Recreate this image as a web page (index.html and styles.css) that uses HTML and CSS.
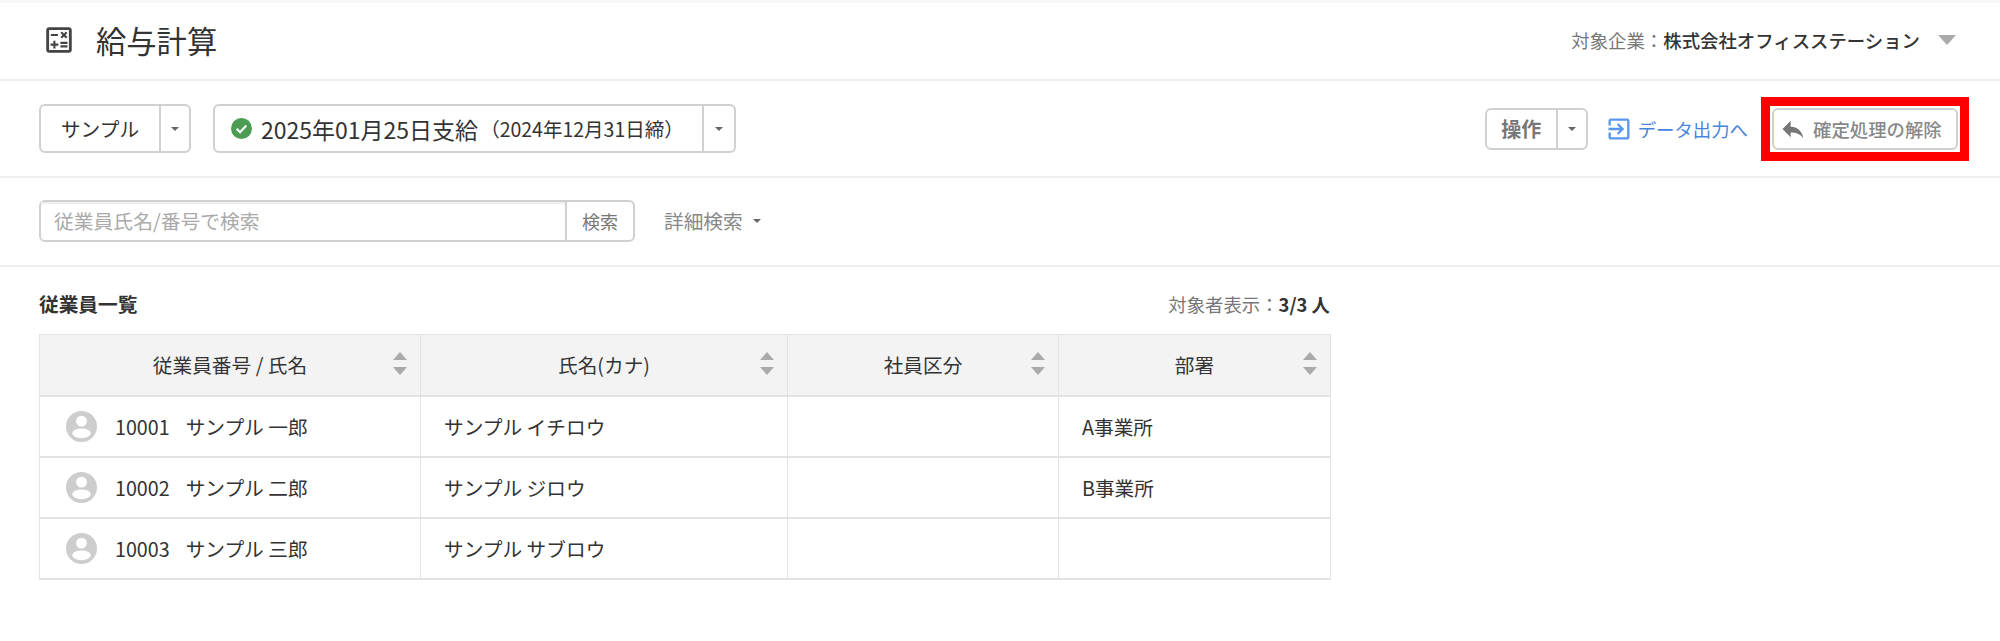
FILE: index.html
```html
<!DOCTYPE html>
<html lang="ja">
<head>
<meta charset="utf-8">
<title>給与計算</title>
<link rel="stylesheet" href="styles.css">
</head>
<body>
<header class="page-head">
  <div class="head-title">
    <svg class="icon-calc" viewBox="0 0 24 24"><path d="M19 3H5c-1.1 0-2 .9-2 2v14c0 1.1.9 2 2 2h14c1.1 0 2-.9 2-2V5c0-1.1-.9-2-2-2zm0 16H5V5h14v14zM6.25 7.72h5v1.5h-5zM13 15.75h5v1.5h-5zM13 13.25h5v1.5h-5zM8 18h1.5v-2h2v-1.5h-2v-2H8v2H6V16h2zM14.09 10.95l1.41-1.41 1.41 1.41 1.06-1.06-1.41-1.42 1.41-1.41L16.91 6 15.5 7.41 14.09 6l-1.06 1.06 1.41 1.41-1.41 1.42z"/></svg>
    <h1>給与計算</h1>
  </div>
  <div class="company"><span class="muted">対象企業：</span><b>株式会社オフィスステーション</b><i class="tri"></i></div>
</header>

<section class="toolbar">
  <div class="tool-left">
    <div class="split split-sample"><span class="split-main">サンプル</span><span class="split-caret"><i class="caret"></i></span></div>
    <div class="split split-date">
      <span class="split-main date-main">
        <svg class="icon-check" viewBox="0 0 20 20"><circle cx="10" cy="10" r="10" fill="#4d9c54"/><path d="M5.4 10.3l3.2 3.2 6-6.4" fill="none" stroke="#fff" stroke-width="2"/></svg>
        <span class="date-big">2025年01月25日支給</span><span class="date-small">（2024年12月31日締）</span>
      </span>
      <span class="split-caret"><i class="caret"></i></span>
    </div>
  </div>
  <div class="tool-right">
    <div class="split split-op"><span class="split-main op-main">操作</span><span class="split-caret"><i class="caret"></i></span></div>
    <a class="export-link"><svg class="icon-export" viewBox="0 0 24 24"><path d="M10.09 15.59L11.5 17l5-5-5-5-1.41 1.41L12.67 11H3v2h9.67l-2.58 2.59zM19 3H5c-1.11 0-2 .9-2 2v4h2V5h14v14H5v-4H3v4c0 1.1.89 2 2 2h14c1.1 0 2-.9 2-2V5c0-1.1-.9-2-2-2z"/></svg>データ出力へ</a>
    <div class="highlight">
      <button class="undo-btn"><svg class="icon-reply" viewBox="0 0 24 24"><path d="M10 9V5l-7 7 7 7v-4.1c5 0 8.5 1.6 11 5.1-1-5-4-10-11-10z"/></svg>確定処理の解除</button>
    </div>
  </div>
</section>

<section class="filter">
  <div class="search">
    <span class="search-input">従業員氏名/番号で検索</span>
    <span class="search-btn">検索</span>
  </div>
  <span class="detail">詳細検索<i class="caret"></i></span>
</section>

<main class="content">
  <div class="list">
    <div class="list-head">
      <b class="list-title">従業員一覧</b>
      <span class="count"><span class="muted">対象者表示：</span><b>3/3 人</b></span>
    </div>
    <table class="grid">
      <colgroup><col class="c1"><col class="c2"><col class="c3"><col class="c4"></colgroup>
      <thead>
        <tr>
          <th>従業員番号 / 氏名<span class="sort"><i class="up"></i><i class="down"></i></span></th>
          <th>氏名(カナ)<span class="sort"><i class="up"></i><i class="down"></i></span></th>
          <th>社員区分<span class="sort"><i class="up"></i><i class="down"></i></span></th>
          <th>部署<span class="sort"><i class="up"></i><i class="down"></i></span></th>
        </tr>
      </thead>
      <tbody>
        <tr>
          <td><div class="emp"><svg class="avatar" viewBox="0 0 32 32"><circle cx="16" cy="16" r="16" fill="#cdcdcd"/><circle cx="16" cy="10.5" r="5.6" fill="#fff"/><ellipse cx="16" cy="23" rx="9.5" ry="5" fill="#fff"/></svg><span class="emp-no">10001</span><span>サンプル 一郎</span></div></td>
          <td>サンプル イチロウ</td><td></td><td>A事業所</td>
        </tr>
        <tr>
          <td><div class="emp"><svg class="avatar" viewBox="0 0 32 32"><circle cx="16" cy="16" r="16" fill="#cdcdcd"/><circle cx="16" cy="10.5" r="5.6" fill="#fff"/><ellipse cx="16" cy="23" rx="9.5" ry="5" fill="#fff"/></svg><span class="emp-no">10002</span><span>サンプル 二郎</span></div></td>
          <td>サンプル ジロウ</td><td></td><td>B事業所</td>
        </tr>
        <tr>
          <td><div class="emp"><svg class="avatar" viewBox="0 0 32 32"><circle cx="16" cy="16" r="16" fill="#cdcdcd"/><circle cx="16" cy="10.5" r="5.6" fill="#fff"/><ellipse cx="16" cy="23" rx="9.5" ry="5" fill="#fff"/></svg><span class="emp-no">10003</span><span>サンプル 三郎</span></div></td>
          <td>サンプル サブロウ</td><td></td><td></td>
        </tr>
      </tbody>
    </table>
  </div>
</main>
</body>
</html>
```
FILE: styles.css
```css
* { box-sizing: border-box; }
html, body { margin: 0; padding: 0; }
body {
  width: 2000px;
  height: 641px;
  overflow: hidden;
  background: #fff;
  color: #333;
  font-family: "Noto Sans CJK JP", "Noto Sans", sans-serif;
  font-size: 18px;
  border-top: 3px solid #f7f7f7;
}
.page-head {
  height: 78px;
  padding: 0 44px 2px 46px;
  border-bottom: 2px solid #eee;
  display: flex;
  align-items: center;
  justify-content: space-between;
}
.head-title { display: flex; align-items: center; }
.icon-calc { width: 34px; height: 34px; margin-left: -4px; fill: #444; flex: none; }
h1 { margin: 0 0 0 20px; font-size: 30.3px; font-weight: 400; line-height: 1.2; color: #333; }
.company { display: flex; align-items: center; font-size: 18.4px; }
.muted { color: #777; font-weight: 400; }
.company b { font-weight: 500; color: #333; }
.tri {
  width: 0; height: 0; margin-left: 18px;
  border-left: 9px solid transparent;
  border-right: 9px solid transparent;
  border-top: 10px solid #aaa;
}
.toolbar {
  height: 97px;
  padding: 0 31px 0 39px;
  border-bottom: 2px solid #eee;
  display: flex;
  align-items: center;
  justify-content: space-between;
}
.tool-left, .tool-right { display: flex; align-items: center; }
.split {
  display: flex;
  height: 49px;
  border: 2px solid #d0d0d0;
  border-radius: 6px;
  background: #fff;
}
.split-main { display: flex; align-items: center; justify-content: center; border-right: 2px solid #d0d0d0; flex: none; }
.split-caret { display: flex; align-items: center; justify-content: center; flex: none; }
.caret {
  display: inline-block;
  width: 0; height: 0;
  border-left: 4.5px solid transparent;
  border-right: 4.5px solid transparent;
  border-top: 4px solid #666;
}
.split-sample { width: 152px; font-size: 19.7px; }
.split-sample .split-main { width: 120px; }
.split-sample .split-caret { width: 28px; }
.split-date { width: 523px; margin-left: 22px; }
.date-main { width: 489px; justify-content: flex-start; padding-left: 16px; }
.split-date .split-caret { width: 30px; }
.icon-check { width: 21px; height: 21px; margin-right: 9px; flex: none; }
.date-big { font-size: 23px; white-space: nowrap; }
.date-small { font-size: 19.5px; margin-left: 2px; white-space: nowrap; }
.split-op { width: 103px; height: 42px; }
.op-main { width: 71px; font-weight: 700; color: #777; font-size: 20px; }
.split-op .split-caret { width: 28px; }
.export-link {
  display: flex;
  align-items: center;
  margin-left: 17px;
  color: #4a84dc;
  font-size: 18.4px;
  white-space: nowrap;
}
.icon-export { width: 28px; height: 28px; fill: #5a97ec; margin-right: 5px; flex: none; }
.highlight { margin-left: 13px; padding: 2px; border: 9px solid #f00; }
.undo-btn {
  width: 186px;
  height: 42px;
  padding: 0 0 0 5px;
  display: flex;
  align-items: center;
  background: #fff;
  border: 2px solid #d0d0d0;
  border-radius: 6px;
  color: #888;
  font: 500 18.4px "Noto Sans CJK JP", sans-serif;
  white-space: nowrap;
}
.icon-reply { width: 28px; height: 28px; fill: #777; margin-right: 6px; flex: none; }
.filter {
  height: 89px;
  padding: 0 39px 2px;
  border-bottom: 2px solid #eee;
  display: flex;
  align-items: center;
}
.search {
  display: flex;
  width: 596px;
  height: 42px;
  border: 2px solid #d0d0d0;
  border-radius: 6px;
}
.search-input {
  flex: 1;
  padding-left: 13px;
  color: #aaa;
  font-size: 19.8px;
  line-height: 38px;
  border-right: 2px solid #d0d0d0;
  box-shadow: inset 0 2px 1px #eee;
}
.search-btn { width: 66px; text-align: center; color: #777; font-size: 18px; line-height: 38px; }
.detail { display: flex; align-items: center; margin-left: 29px; color: #888; font-size: 19.7px; }
.detail .caret { margin-left: 10px; }
.content { padding: 0 39px; }
.list { width: 1291px; }
.list-head {
  height: 67px;
  padding-top: 6px;
  display: flex;
  align-items: center;
  justify-content: space-between;
}
.list-title { font-size: 19.7px; font-weight: 700; color: #333; }
.count { font-size: 18.4px; }
.count b { font-weight: 700; color: #333; }
.grid {
  width: 100%;
  table-layout: fixed;
  border-collapse: collapse;
  font-size: 19.7px;
}
.c1 { width: 381px; }
.c2 { width: 367px; }
.c3 { width: 271px; }
.c4 { width: 272px; }
.grid th {
  position: relative;
  height: 61px;
  padding: 0;
  background: #f3f3f3;
  font-weight: 400;
  color: #333;
  text-align: center;
  border: 1px solid #e3e3e3;
  border-bottom-width: 2px;
}
.grid td {
  height: 61px;
  padding: 0 0 0 23px;
  border: 1px solid #e3e3e3;
  border-bottom-width: 2px;
  color: #333;
  white-space: nowrap;
}
.sort {
  position: absolute;
  right: 13px;
  top: 17px;
  display: flex;
  flex-direction: column;
  gap: 7px;
}
.up, .down { display: block; width: 0; height: 0; border-left: 7px solid transparent; border-right: 7px solid transparent; }
.up { border-bottom: 8px solid #aaa; }
.down { border-top: 8px solid #aaa; }
.emp { display: flex; align-items: center; margin-left: 3px; }
.avatar { width: 31px; height: 31px; margin-right: 18px; flex: none; }
.emp-no { margin-right: 16px; }
```
